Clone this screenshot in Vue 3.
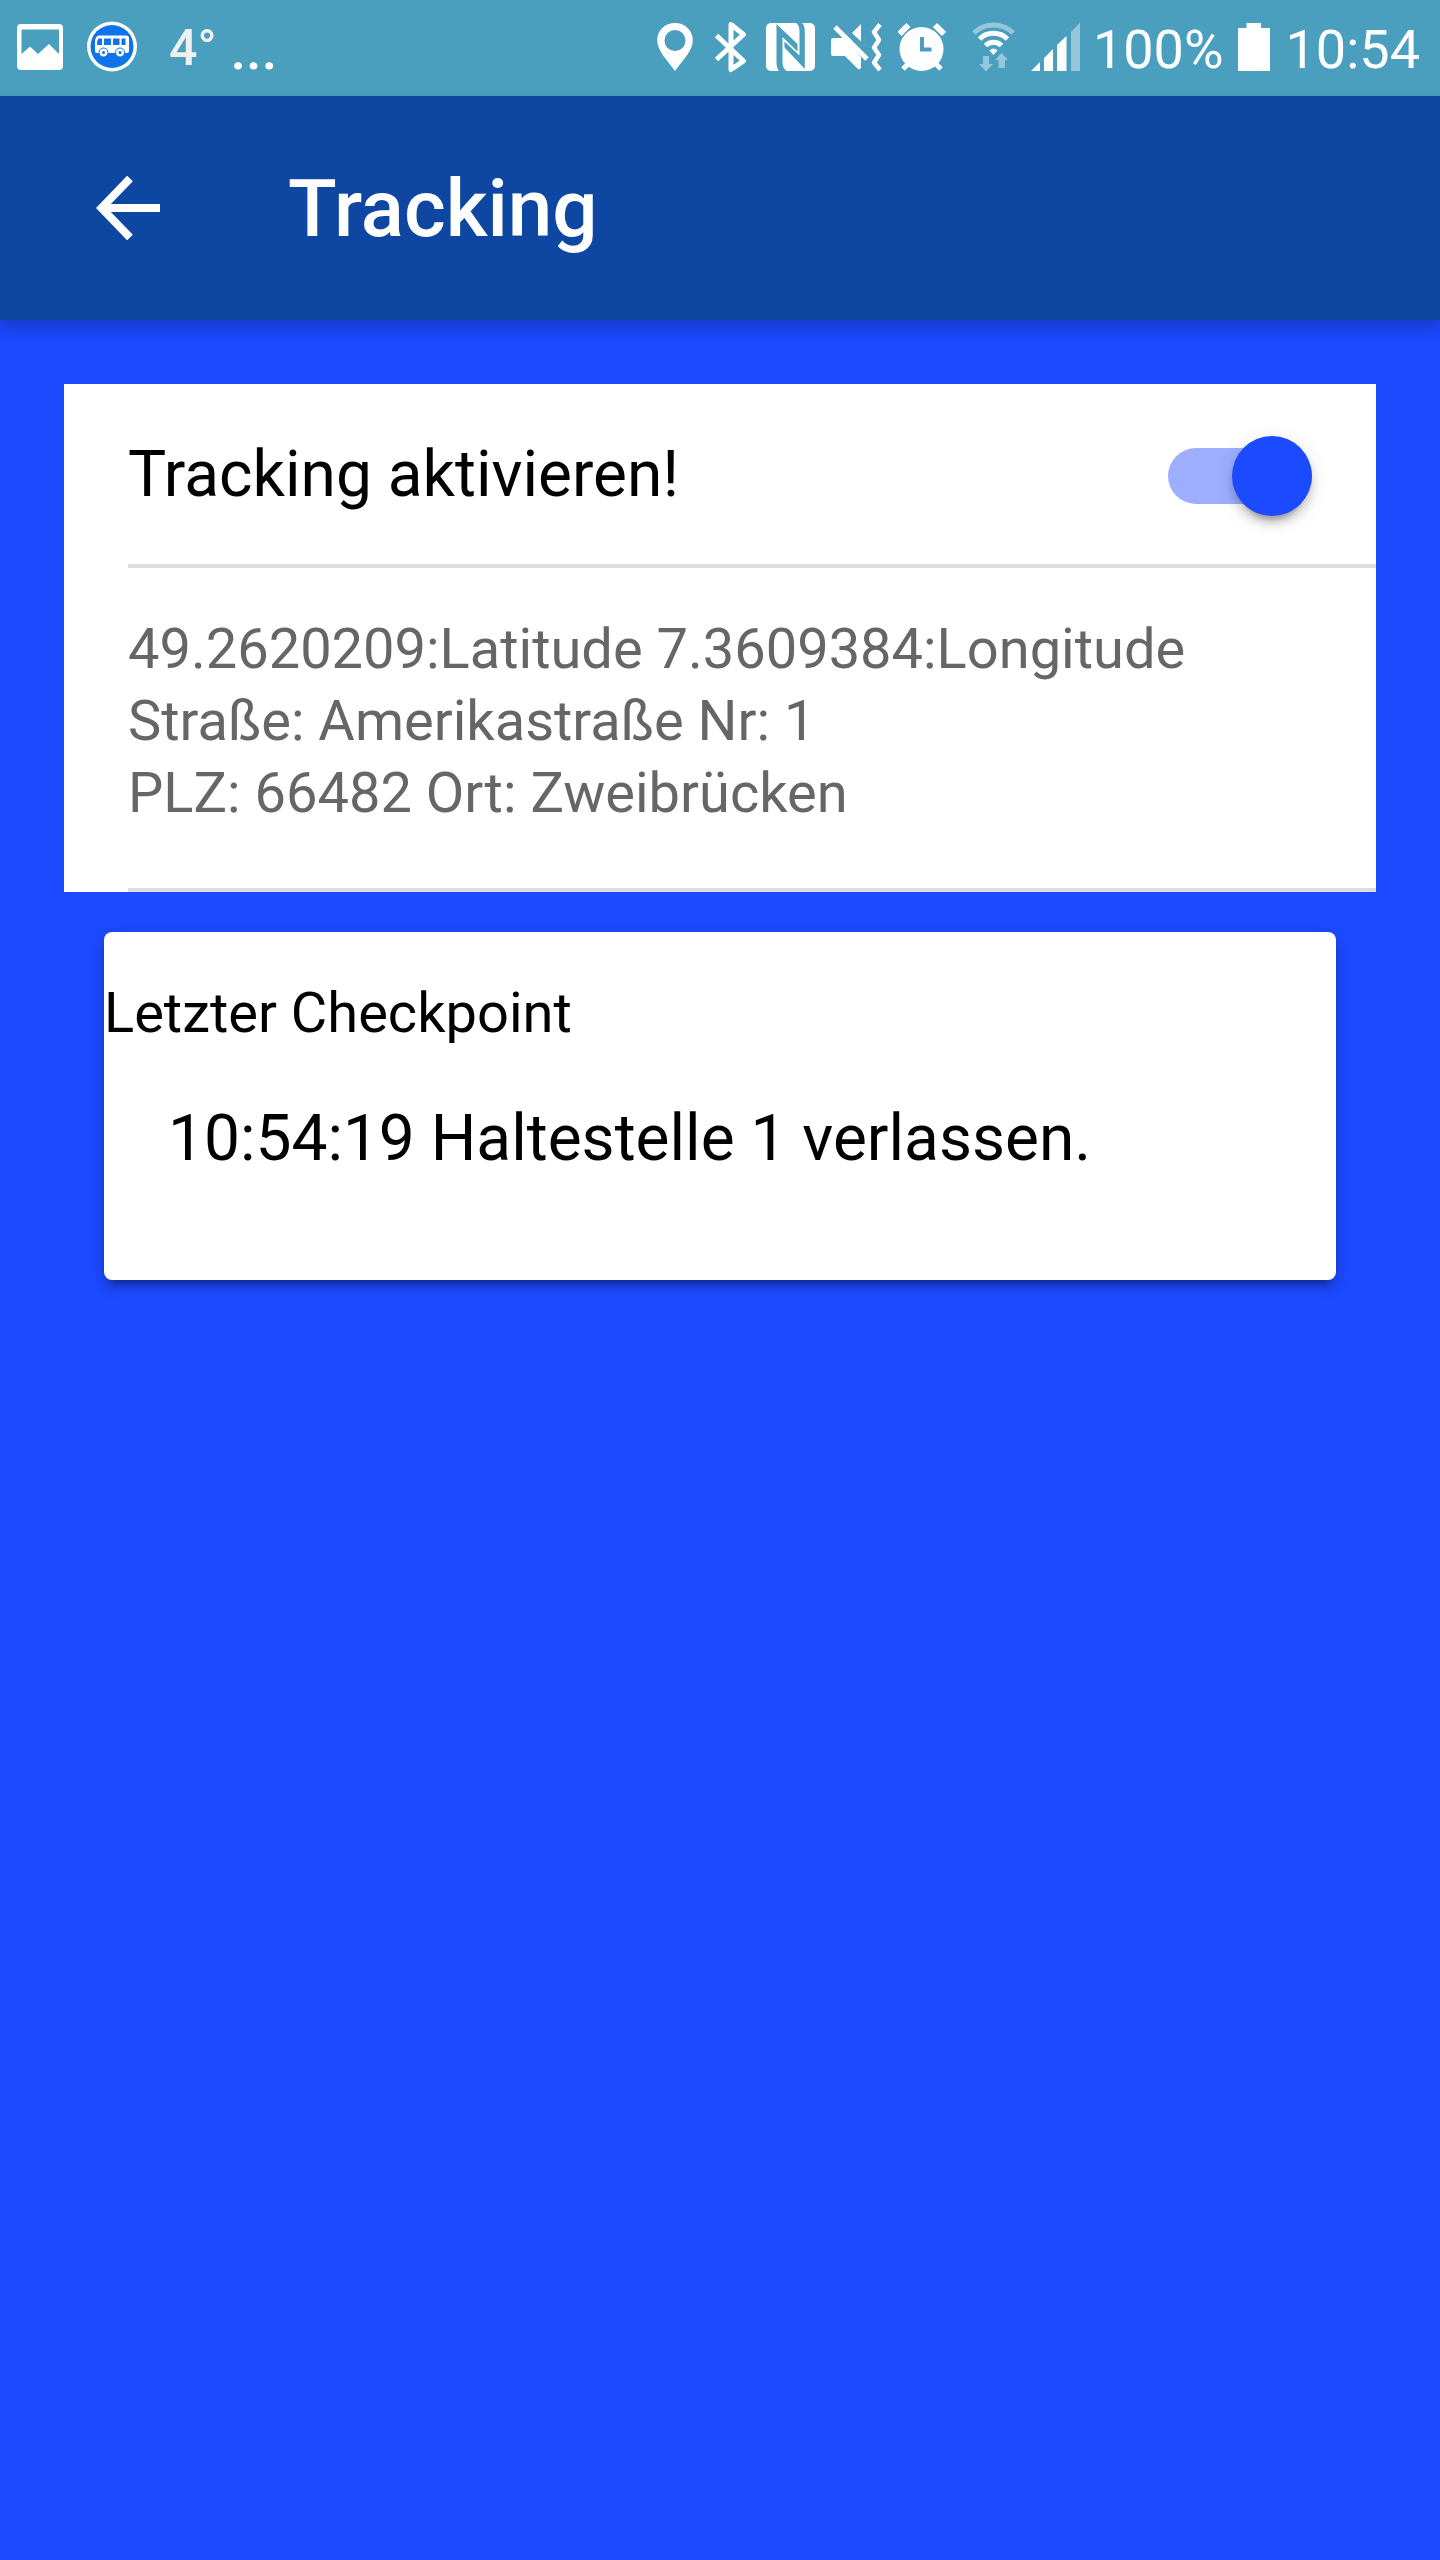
<script setup>
import { ref } from 'vue'

const tracking = ref(true)
const address = [
  '49.2620209:Latitude 7.3609384:Longitude',
  'Straße: Amerikastraße Nr: 1',
  'PLZ: 66482 Ort: Zweibrücken',
]
const checkpoint = '10:54:19 Haltestelle 1 verlassen.'
</script>

<template>
  <div class="screen">
    <div class="status">
      <div class="group notifications">
        <svg width="46" height="56" viewBox="17 20 46 56" aria-hidden="true">
          <path fill="#fff" fill-rule="evenodd" d="M21 24h38q4 0 4 4v38q0 4-4 4H21q-4 0-4-4V28q0-4 4-4zM21.500 29.500V54L30 46.500 38 54 49 44l10 10V29.500z" />
        </svg>
        <svg width="50" height="56" viewBox="87 20 50 56" aria-hidden="true">
          <circle cx="112" cy="46.500" r="25" fill="#fff" />
          <circle cx="112" cy="46.500" r="21.500" fill="#0f73ea" />
          <path fill="#fff" d="M99 35.500h27q3 0 3 3V51q0 2-2 2H97q-2 0-2-2v-8q0-7.500 4-7.500z" />
          <path fill="#0f73ea" d="M98.500 38.500h3.500V45h-5q0-5 1.500-6.500zM104 38.500h7V45h-7zM113 38.500h6.500V45H113zM121.500 38.500h4V45h-4z" />
          <g fill="#fff" stroke="#0f73ea" stroke-width="1">
            <circle cx="103.500" cy="52.500" r="4.500" />
            <circle cx="120" cy="52.500" r="4.500" />
          </g>
          <circle cx="103.500" cy="52.500" r="1.500" fill="#0f73ea" />
          <circle cx="120" cy="52.500" r="1.500" fill="#0f73ea" />
        </svg>
        <span class="temperature">4°</span>
        <span class="more">...</span>
      </div>

      <div class="group indicators">
        <div class="group radios">
          <svg width="44" height="56" viewBox="652 20 44 56" aria-hidden="true">
            <path fill="#fff" fill-rule="evenodd" d="M673 23c10 0 17.800 7.500 17.800 17 0 10-8 18-17.800 31-9.800-13-17.800-21-17.800-31 0-9.500 7.800-17 17.800-17zm0 7a10.500 10.500 0 1 0 0 21 10.500 10.500 0 0 0 0-21z" />
          </svg>
          <svg width="36" height="56" viewBox="712 20 36 56" aria-hidden="true">
            <path fill="none" stroke="#fff" stroke-width="5" stroke-linejoin="round" d="M714.500 35.500l27 25.500-12.500 8.500V24.500l12.500 10-27 25" />
          </svg>
          <svg width="49" height="56" viewBox="764 20 49 56" aria-hidden="true">
            <rect x="764" y="23" width="49" height="48" rx="5" fill="#fff" />
            <g transform="translate(760 16)" class="cut">
              <path d="M14.500 8l21 20v7.500L20.500 21v25q0 7 4.500 9h-8q-2.500-3-2.500-9z" />
              <path d="M22.500 25.500l15 14V15q0-6-3.500-8h6q2.800 2 2.800 9v37L22.500 31.500z" />
            </g>
          </svg>
          <svg width="51" height="56" viewBox="829 20 51 56" aria-hidden="true">
            <g transform="translate(825 16)">
              <path fill="#fff" d="M6 22h12l16 19v10q0 3-3 2L18 40H6q-2 0-2-2V24q0-2 2-2zM34 8v17.500L25 17z" />
              <path fill="none" stroke="#fff" stroke-width="5" d="M8 11l32 32" />
              <path fill="none" stroke="#fff" stroke-width="4.500" stroke-linejoin="round" d="M53 8.500l-6 7.500 5 8-5 7.500 5 7.500-5 7.500 6 7.500" />
            </g>
          </svg>
          <svg width="48" height="56" viewBox="896 20 48 56" aria-hidden="true">
            <circle cx="919.500" cy="49" r="22" fill="#fff" />
            <path stroke="#fff" stroke-width="6" d="M897.500 34l9-9M942 34l-9-9" />
            <path stroke="#fff" stroke-width="5" d="M901 69l6-6M939 69l-6-6" />
            <path class="cut-line" fill="none" stroke-width="4" d="M920 37v12.500h9.500" />
          </svg>
          <svg width="53" height="56" viewBox="960 20 53 56" aria-hidden="true">
            <g fill="none" stroke="#fff" stroke-width="5">
              <path opacity=".42" d="M971.800 33a28 28 0 0 1 39.400 0" />
              <path d="M977.500 39a20 20 0 0 1 28 0" />
              <path d="M983.500 45.500a11.500 11.500 0 0 1 16 0" />
            </g>
            <path fill="#fff" d="M991.500 55l-4-4.500q4-4 8 0z" />
            <path fill="#fff" opacity=".42" d="M981 56h6v8h4l-7 7.500-7-7.500h4zM999.500 53l6.500 7h-3v8h-6.500v-8H993z" />
          </svg>
          <svg width="50" height="56" viewBox="1029 20 50 56" aria-hidden="true">
            <path fill="#fff" d="M1029 71l9-9v9zM1042 71V58l9-9v22zM1055 71V45l9.500-9v35z" />
            <path fill="#fff" opacity=".42" d="M1069 71V32l9-9.500V71z" />
          </svg>
        </div>
        <span class="reading">100%</span>
        <svg width="38" height="56" viewBox="1236 20 38 56" aria-hidden="true">
          <path fill="#fff" d="M1238 28h8.500v-5h14.500v5h9v43h-32z" />
        </svg>
        <span class="reading">10:54</span>
      </div>
    </div>

    <header class="toolbar">
      <button class="back" type="button" aria-label="Zurück">
        <svg width="66" height="64" viewBox="0 0 66 64" aria-hidden="true">
          <path fill="none" stroke="#fff" stroke-width="8" d="M64 32H6M34 2.500L5.500 32 34 61.500" />
        </svg>
      </button>
      <h1>Tracking</h1>
    </header>

    <main class="content">
      <section class="list">
        <label class="item">
          <span class="inner switch-row">
            <span class="label">Tracking aktivieren!</span>
            <input v-model="tracking" class="toggle" type="checkbox" role="switch" />
          </span>
        </label>
        <div class="item">
          <div class="inner address">
            <p v-for="line in address" :key="line">{{ line }}</p>
          </div>
        </div>
      </section>

      <section class="card">
        <h2>Letzter Checkpoint</h2>
        <p class="checkpoint">{{ checkpoint }}</p>
      </section>
    </main>
  </div>
</template>

<style>
body {
  background: #1c4aff;
}
</style>

<style scoped>
.screen {
  --status: #4a9ebe;
  --accent: #1c4aff;
  min-height: 100vh;
  background: var(--accent);
  color: #000;
  font-family: Roboto, "Noto Sans", sans-serif;
}

h1,
h2,
p {
  margin: 0;
  font-weight: 400;
}

svg {
  display: block;
  flex: none;
}

.status {
  display: flex;
  justify-content: space-between;
  height: 96px;
  padding: 0 20px 0 17px;
  background: var(--status);
  color: #fff;
}

.group {
  display: flex;
  align-items: center;
}

.indicators {
  gap: 12px;
}

.radios {
  gap: 16px;
}

.notifications {
  gap: 24px;
}

.temperature {
  margin-left: 8px;
  color: #f0f0f0;
  font-size: 50px;
  font-weight: 500;
}

.more {
  margin-left: -10px;
  padding-top: 4px;
  font-size: 56px;
  font-weight: 500;
}

.reading {
  padding-top: 4px;
  font-size: 54px;
  line-height: 56px;
}

.cut {
  fill: var(--status);
}

.cut-line {
  stroke: var(--status);
}

.toolbar {
  position: relative;
  display: flex;
  align-items: center;
  height: 224px;
  padding: 0 96px;
  background: #0d47a1;
  box-shadow: 0 8px 16px rgba(0, 0, 0, 0.22);
  color: #fff;
}

.back {
  padding: 0;
  border: 0;
  background: none;
}

.toolbar h1 {
  margin-left: 126px;
  padding-top: 2px;
  font-size: 80px;
  font-weight: 500;
}

.content {
  padding: 64px;
}

.list {
  background: #fff;
}

.item {
  display: block;
  padding-left: 64px;
}

.inner {
  display: block;
  border-bottom: 4px solid #dedede;
}

.switch-row {
  display: flex;
  align-items: center;
  justify-content: space-between;
  height: 180px;
  padding-right: 64px;
}

.label {
  font-size: 64px;
}

.toggle {
  position: relative;
  display: flex;
  justify-content: flex-start;
  width: 144px;
  height: 80px;
  margin: 4px 0 0;
  appearance: none;
}

.toggle:checked {
  justify-content: flex-end;
}

.toggle::before {
  position: absolute;
  inset: 12px 0;
  border-radius: 28px;
  background: #9daeff;
  content: "";
}

.toggle::after {
  position: relative;
  width: 80px;
  height: 80px;
  border-radius: 50%;
  background: var(--accent);
  box-shadow:
    0 8px 8px rgba(0, 0, 0, 0.14),
    0 12px 4px -8px rgba(0, 0, 0, 0.2),
    0 4px 20px rgba(0, 0, 0, 0.12);
  content: "";
}

.address {
  padding: 45px 64px 59px 0;
  color: #666;
  font-size: 56px;
  line-height: 72px;
}

.card {
  margin: 40px;
  padding: 45px 0 101px;
  border-radius: 8px;
  background: #fff;
  box-shadow:
    0 8px 8px rgba(0, 0, 0, 0.14),
    0 12px 4px -8px rgba(0, 0, 0, 0.2),
    0 4px 20px rgba(0, 0, 0, 0.12);
}

.card h2 {
  font-size: 56px;
  line-height: 72px;
}

.checkpoint {
  margin-top: 50px;
  padding: 0 64px;
  font-size: 64px;
  line-height: 80px;
}
</style>
